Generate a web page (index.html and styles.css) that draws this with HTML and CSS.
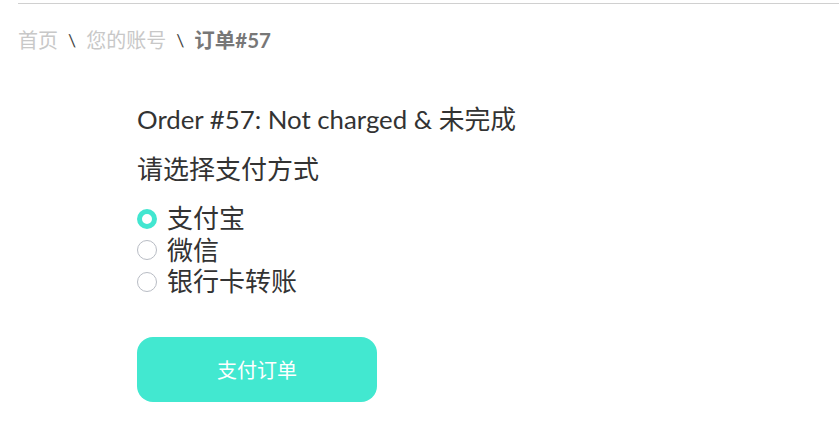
FILE: index.html
```html
<!DOCTYPE html>
<html lang="zh">
<head>
<meta charset="utf-8">
<link rel="stylesheet" href="styles.css">
</head>
<body>
<div class="page">
  <nav class="crumbs">
    <a class="crumb" href="#">首页</a>
    <span class="sep">\</span>
    <a class="crumb" href="#">您的账号</a>
    <span class="sep">\</span>
    <span class="crumb current">订单#57</span>
  </nav>
  <main class="order">
    <h1 class="title">Order #57: Not charged &amp; 未完成</h1>
    <h2 class="subtitle">请选择支付方式</h2>
    <form class="pay-form">
      <div class="methods">
        <label class="method"><input type="radio" name="pay" checked><span class="dot"></span><span>支付宝</span></label>
        <label class="method"><input type="radio" name="pay"><span class="dot"></span><span>微信</span></label>
        <label class="method"><input type="radio" name="pay"><span class="dot"></span><span>银行卡转账</span></label>
      </div>
      <button type="button" class="pay-btn">支付订单</button>
    </form>
  </main>
</div>
</body>
</html>
```
FILE: styles.css
```css
* { box-sizing: border-box; }
body {
  margin: 0;
  background: #fff;
  font-family: Lato, "Noto Sans CJK SC", sans-serif;
  color: #333;
}
.page {
  margin: 3px 0 0 18px;
  border-top: 1px solid #d0d0d0;
}
.crumbs {
  display: flex;
  align-items: center;
  gap: 10px;
  padding-top: 21px;
  font-size: 20px;
  line-height: 30px;
}
.crumb {
  color: #c8c8c8;
  text-decoration: none;
}
.sep {
  color: #444;
  font-size: 18px;
}
.current {
  color: #777;
  font-weight: 700;
  font-size: 20.5px;
}
.order {
  margin-left: 119px;
  padding-top: 46px;
}
.title {
  margin: 0;
  font-size: 25.8px;
  font-weight: 400;
  line-height: 36px;
}
.subtitle {
  margin: 14px 0 0;
  font-size: 26px;
  font-weight: 400;
  line-height: 36px;
}
.methods {
  display: flex;
  flex-direction: column;
  margin-top: 16px;
}
.method {
  display: flex;
  align-items: center;
  gap: 10px;
  font-size: 26px;
  line-height: 31.5px;
  cursor: pointer;
}
.method input {
  display: none;
}
.dot {
  width: 20px;
  height: 20px;
  border-radius: 50%;
  border: 1px solid #b8bcc4;
  background: #fff;
}
.method input:checked + .dot {
  border: 5.5px solid #42e6d0;
}
.pay-btn {
  display: block;
  margin-top: 39px;
  width: 240px;
  height: 65px;
  border: none;
  border-radius: 16px;
  background: #42e8d0;
  color: #fff;
  font-family: Lato, "Noto Sans CJK SC", sans-serif;
  font-size: 20px;
  cursor: pointer;
}
```
